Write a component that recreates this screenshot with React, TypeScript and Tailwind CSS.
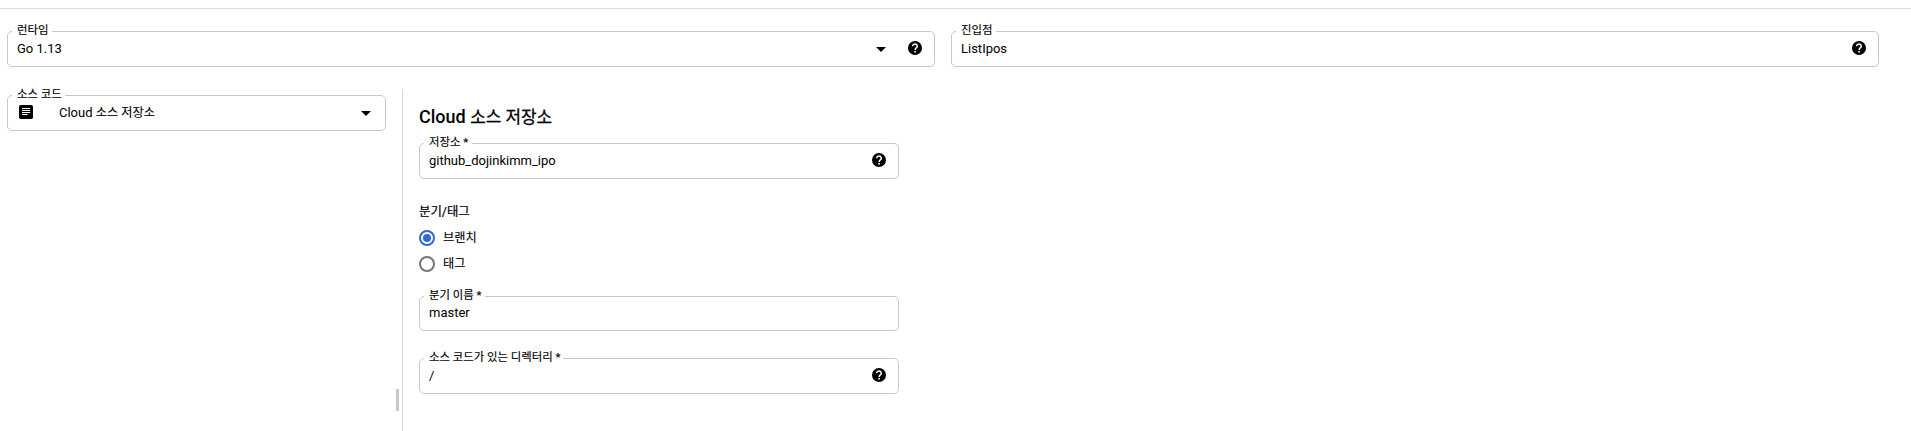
import type { ReactNode } from "react";

function HelpIcon() {
  return (
    <svg viewBox="0 0 14 14" className="mb-[2px] size-[14px] shrink-0" fill="none">
      <circle cx="7" cy="7" r="7" fill="black" />
      <path d="M4.700 5.300a2.300 2.100 0 1 1 3.600 1.600C7.400 7.500 7.100 7.900 7.100 8.900" stroke="white" strokeWidth="1.500" />
      <path d="M6.200 10h1.700v1.600H6.200z" fill="white" />
    </svg>
  );
}

function CaretIcon() {
  return (
    <svg viewBox="0 0 10 5" className="h-[5px] w-[10px] shrink-0 fill-black">
      <path d="M0 0h10L5 5z" />
    </svg>
  );
}

function ArticleIcon() {
  return (
    <svg viewBox="0 0 14 14" className="size-[14px] shrink-0">
      <rect width="14" height="14" rx="1.8" />
      <path d="M3 3.500h8M3 5.500h8M3 7.500h8M3 9.500h5.500" stroke="white" strokeWidth="1" />
    </svg>
  );
}

type FieldProps = {
  label: string;
  className: string;
  labelClass: string;
  children: ReactNode;
};

function Field({ label, className, labelClass, children }: FieldProps) {
  return (
    <div className={`relative flex shrink-0 items-center rounded-[5px] border border-[#c8c8c8] pl-[9px] pr-[12px] ${className}`}>
      <span className={`absolute -top-[10px] left-1 flex h-4 items-center whitespace-nowrap bg-white pl-[5px] text-[11.4px] leading-4 [-webkit-text-stroke:0.15px_black] ${labelClass}`}>
        {label}
      </span>
      {children}
    </div>
  );
}

function Radio({ label, checked }: { label: string; checked?: boolean }) {
  return (
    <div className="flex h-[26px] items-center gap-2">
      <span className={`flex size-4 items-center justify-center rounded-full border-2 ${checked ? "border-[#3367d6]" : "border-[#757575]"}`}>
        {checked && <span className="size-2 rounded-full bg-[#3367d6]" />}
      </span>
      <span className="text-[12.2px] leading-4 [-webkit-text-stroke:0.1px_black]">{label}</span>
    </div>
  );
}

export default function App() {
  return (
    <div className="flex h-[431px] w-[1911px] flex-col overflow-hidden bg-white pt-2 font-['Roboto','Noto_Sans_CJK_KR',sans-serif] text-[13px] leading-4 text-black">
      <div className="h-px shrink-0 bg-[#dadada]" />
      <div className="flex gap-4 pl-[7px] pt-[22px]">
        <Field label="런타임" className="h-9 w-[928px]" labelClass="w-[40px]">
          <span className="grow">Go 1.13</span>
          <CaretIcon />
          <span className="ml-[22px] flex"><HelpIcon /></span>
        </Field>
        <Field label="진입점" className="h-9 w-[928px]" labelClass="w-[40px]">
          <span className="grow">ListIpos</span>
          <HelpIcon />
        </Field>
      </div>
      <div className="flex grow pt-[22px]">
        <div className="flex w-[402px] shrink-0 flex-col pl-[7px] pt-[6px]">
          <Field label="소스 코드" className="h-9 w-[379px]" labelClass="w-[53px]">
            <span className="ml-[2px] flex pb-[2px]"><ArticleIcon /></span>
            <span className="ml-[26px] grow">
              Cloud <span className="text-[12.200px] [-webkit-text-stroke:0.1px_black]">소스 저장소</span>
            </span>
            <span className="mr-[2px] flex"><CaretIcon /></span>
          </Field>
          <div className="ml-[389px] mt-[258px] h-[22px] w-[3px] bg-[#c8c8c8]" />
        </div>
        <div className="flex grow flex-col border-l border-[#dadada] pl-4">
          <h2 className="mt-[16px] h-6 text-[18px] font-medium leading-6">
            Cloud <span className="text-[16.900px] font-normal [-webkit-text-stroke:0.3px_black]">소스 저장소</span>
          </h2>
          <Field label="저장소 *" className="mt-[14px] h-9 w-[480px]" labelClass="w-[48px]">
            <span className="grow">github_dojinkimm_ipo</span>
            <HelpIcon />
          </Field>
          <div className="mt-[25px] h-4 text-[12.400px] leading-4 [-webkit-text-stroke:0.2px_black]">분기/태그</div>
          <div className="mt-[5px] flex flex-col">
            <Radio label="브랜치" checked />
            <Radio label="태그" />
          </div>
          <Field label="분기 이름 *" className="mt-[19px] h-[35px] w-[480px]" labelClass="w-[61px]">
            <span className="grow pb-px">master</span>
          </Field>
          <Field label="소스 코드가 있는 디렉터리 *" className="mt-[27px] h-9 w-[480px]" labelClass="w-[139px]">
            <span className="grow">/</span>
            <HelpIcon />
          </Field>
        </div>
      </div>
    </div>
  );
}
